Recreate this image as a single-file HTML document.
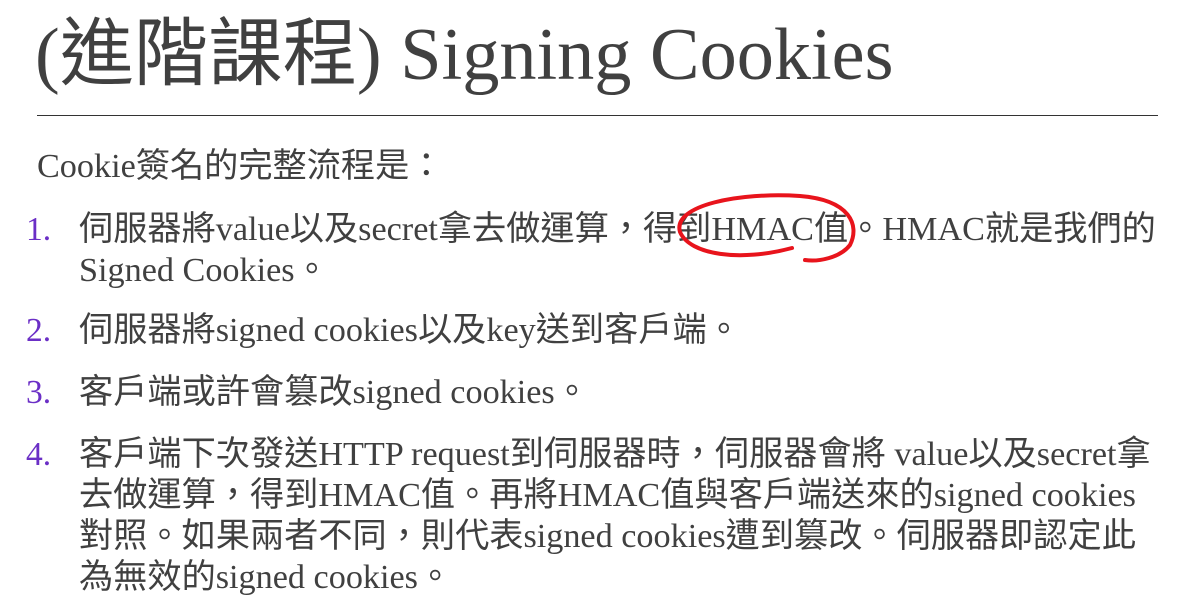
<!DOCTYPE html>
<html><head><meta charset="utf-8"><style>
body{margin:0;width:1186px;height:616px;background:#fff;overflow:hidden;position:relative;font-family:"Liberation Serif","Noto Sans CJK TC",serif;color:#404040}
.t{position:absolute;left:35px;top:10px;font-size:74.3px;line-height:90px;white-space:nowrap}
.hr{position:absolute;left:37px;top:115px;width:1121px;height:1px;background:#333}
.l{position:absolute;font-size:34.2px;line-height:40px;white-space:nowrap}
.n{position:absolute;left:26px;font-size:33.5px;line-height:40px;color:#6b2fc6}
</style></head><body>
<div class="t">(進階課程) Signing Cookies</div>
<div class="hr"></div>
<div class="l" style="left:37px;top:147px">Cookie簽名的完整流程是：</div>
<div class="n" style="top:210px">1.</div>
<div class="l" style="left:79px;top:210px">伺服器將value以及secret拿去做運算，得到HMAC值。HMAC就是我們的</div>
<div class="l" style="left:79px;top:251px">Signed Cookies。</div>
<div class="n" style="top:311px">2.</div>
<div class="l" style="left:79px;top:311px">伺服器將signed cookies以及key送到客戶端。</div>
<div class="n" style="top:373px">3.</div>
<div class="l" style="left:79px;top:373px">客戶端或許會篡改signed cookies。</div>
<div class="n" style="top:435px">4.</div>
<div class="l" style="left:79px;top:435px">客戶端下次發送HTTP request到伺服器時，伺服器會將 value以及secret拿</div>
<div class="l" style="left:79px;top:476px">去做運算，得到HMAC值。再將HMAC值與客戶端送來的signed cookies</div>
<div class="l" style="left:79px;top:517px">對照。如果兩者不同，則代表signed cookies遭到篡改。伺服器即認定此</div>
<div class="l" style="left:79px;top:558px">為無效的signed cookies。</div>
<svg style="position:absolute;left:0;top:0" width="1186" height="616"><path d="M792 248 C740 262 690 255 680 232 C672 205 740 192 800 196 C850 200 860 225 850 245 C840 258 818 262 805 260" fill="none" stroke="#e8141c" stroke-width="4" stroke-linecap="round"/></svg>
</body></html>
